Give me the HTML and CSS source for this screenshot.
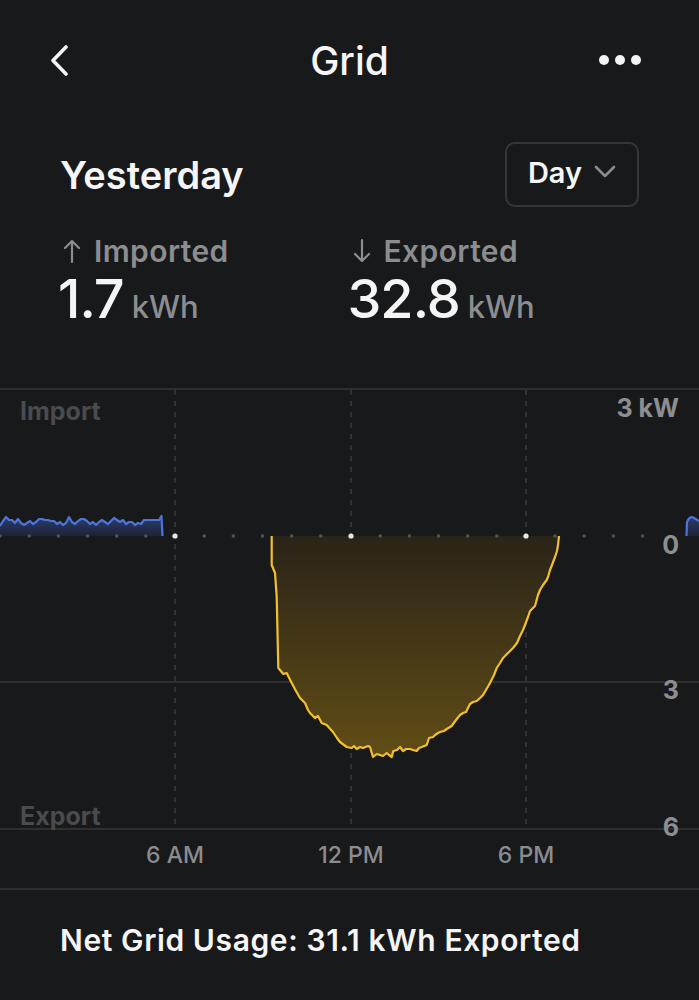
FILE: index.html
```html
<!DOCTYPE html>
<html lang="en">
<head>
<meta charset="utf-8">
<title>Grid</title>
<link rel="stylesheet" href="styles.css">
</head>
<body>
<div class="app">
  <header class="topbar">
    <button class="icon-btn back" aria-label="Back">
      <svg width="24" height="32" viewBox="0 0 24 32"><path d="M16 3 L3 16.5 L16 30" fill="none" stroke="#f4f4f5" stroke-width="3.6" stroke-linecap="round" stroke-linejoin="round"/></svg>
    </button>
    <h1 class="title">Grid</h1>
    <button class="icon-btn more" aria-label="More">
      <svg width="44" height="12" viewBox="0 0 44 12"><circle cx="6" cy="6" r="5" fill="#f4f4f5"/><circle cx="22" cy="6" r="5" fill="#f4f4f5"/><circle cx="38" cy="6" r="5" fill="#f4f4f5"/></svg>
    </button>
  </header>

  <section class="summary">
    <div class="period-row">
      <h2 class="period">Yesterday</h2>
      <button class="range">Day
        <svg class="chev" width="22" height="14" viewBox="0 0 22 14"><path d="M2 2 L11 11 L20 2" fill="none" stroke="#8b8c8f" stroke-width="2.6" stroke-linecap="round" stroke-linejoin="round"/></svg>
      </button>
    </div>
    <div class="stats">
      <div class="stat">
        <div class="stat-label"><svg class="arrow" width="18" height="26" viewBox="0 0 18 26"><path d="M9 24 V3 M2 10 L9 3 L16 10" fill="none" stroke="#8c8d90" stroke-width="2.2" stroke-linecap="round" stroke-linejoin="round"/></svg>Imported</div>
        <div class="stat-value">1.7<span class="unit">kWh</span></div>
      </div>
      <div class="stat">
        <div class="stat-label"><svg class="arrow" width="18" height="26" viewBox="0 0 18 26"><path d="M9 2 V23 M2 16 L9 23 L16 16" fill="none" stroke="#8c8d90" stroke-width="2.2" stroke-linecap="round" stroke-linejoin="round"/></svg>Exported</div>
        <div class="stat-value">32.8<span class="unit">kWh</span></div>
      </div>
    </div>
  </section>

  <div class="chart">
    <svg class="chart-svg" width="699" height="500" viewBox="0 388 699 500">
      <defs>
        <linearGradient id="gold" x1="0" y1="536" x2="0" y2="758" gradientUnits="userSpaceOnUse">
          <stop offset="0" stop-color="#2a2418"/>
          <stop offset="1" stop-color="#614d15"/>
        </linearGradient>
        <linearGradient id="blue" x1="0" y1="516" x2="0" y2="536" gradientUnits="userSpaceOnUse">
          <stop offset="0" stop-color="#2c3e6e"/>
          <stop offset="1" stop-color="#1c2336"/>
        </linearGradient>
      </defs>
      <!-- horizontal grid -->
      <line class="hline" x1="0" y1="389" x2="699" y2="389"/>
      <line class="hline" x1="0" y1="682" x2="699" y2="682"/>
      <line class="hline" x1="0" y1="829" x2="699" y2="829"/>
      <!-- vertical dashed -->
      <line class="vline" x1="175" y1="390" x2="175" y2="828"/>
      <line class="vline" x1="351" y1="390" x2="351" y2="828"/>
      <line class="vline" x1="526" y1="390" x2="526" y2="828"/>

      <!-- import area -->
      <path fill="url(#blue)" d="M0 526 L3 521 L6 517 L9 520 L12 520 L15 523 L18 519 L21 523 L24 525 L27 523 L30 521 L33 524 L36 522 L39 519 L42 519 L45 520 L48 520 L51 521 L54 521 L57 524 L60 522 L63 525 L66 523 L69 517 L72 522 L75 524 L78 521 L81 519 L84 519 L87 521 L90 524 L93 522 L96 525 L99 522 L102 520 L105 522 L108 524 L111 521 L114 518 L117 520 L120 522 L123 520 L126 524 L129 522 L132 522 L135 525 L138 523 L141 524 L144 520 L147 520 L150 520 L153 520 L156 520 L159 520 L161.5 516 L162.5 536 L0 536 Z"/>
      <path class="blue-line" d="M0 526 L3 521 L6 517 L9 520 L12 520 L15 523 L18 519 L21 523 L24 525 L27 523 L30 521 L33 524 L36 522 L39 519 L42 519 L45 520 L48 520 L51 521 L54 521 L57 524 L60 522 L63 525 L66 523 L69 517 L72 522 L75 524 L78 521 L81 519 L84 519 L87 521 L90 524 L93 522 L96 525 L99 522 L102 520 L105 522 L108 524 L111 521 L114 518 L117 520 L120 522 L123 520 L126 524 L129 522 L132 522 L135 525 L138 523 L141 524 L144 520 L147 520 L150 520 L153 520 L156 520 L159 520 L161.5 516 L162.5 536"/>
      <path fill="url(#blue)" d="M686.5 536 L687 522 Q690 515 694 518 L699 521 L699 536 Z"/>
      <path class="blue-line" d="M686.5 536 L687 522 Q690 515 694 518 L699 521"/>

      <!-- export area -->
      <path fill="url(#gold)" d="M271.7 536 L271.7 565 L275 573 L276.7 597 L278.3 668 L283.3 674 L286.7 673 L291.7 683 L296 691 L300 698 L305 703 L308 710 L310 713 L315 718 L318 716 L321.7 723 L326.7 725 L333 732 L337 738 L340 742 L346.7 747 L351.7 748 L354 746 L356.7 749 L360 747 L363 748 L368 746 L370 747 L373 757 L376.7 754 L380 755 L383 756 L386.7 753 L389 755 L391.7 757 L393.3 751 L397 750 L400 747 L403 751 L406 749 L410 749 L413 750 L416.7 751 L419 748 L421.7 747 L426.7 745 L429 738 L433 737 L435 735 L438 733 L440 732 L444 731 L446.7 729 L451.7 726 L456 720 L460 715 L463 713 L466 712 L470 704 L473 702 L476.7 701 L480 698 L483 695 L486 690 L490 683 L494 675 L496.7 668 L500 663 L503 658 L508 653 L513 648 L517 643 L520 636 L523 630 L525 625 L528 617 L530 611 L533 608 L535 606 L538 595 L540 590 L543 585 L546.7 580 L548 577 L550 570 L552 565 L555 557 L557 551 L558 545 L559 536 Z"/>
      <path class="gold-line" d="M271.7 536 L271.7 565 L275 573 L276.7 597 L278.3 668 L283.3 674 L286.7 673 L291.7 683 L296 691 L300 698 L305 703 L308 710 L310 713 L315 718 L318 716 L321.7 723 L326.7 725 L333 732 L337 738 L340 742 L346.7 747 L351.7 748 L354 746 L356.7 749 L360 747 L363 748 L368 746 L370 747 L373 757 L376.7 754 L380 755 L383 756 L386.7 753 L389 755 L391.7 757 L393.3 751 L397 750 L400 747 L403 751 L406 749 L410 749 L413 750 L416.7 751 L419 748 L421.7 747 L426.7 745 L429 738 L433 737 L435 735 L438 733 L440 732 L444 731 L446.7 729 L451.7 726 L456 720 L460 715 L463 713 L466 712 L470 704 L473 702 L476.7 701 L480 698 L483 695 L486 690 L490 683 L494 675 L496.7 668 L500 663 L503 658 L508 653 L513 648 L517 643 L520 636 L523 630 L525 625 L528 617 L530 611 L533 608 L535 606 L538 595 L540 590 L543 585 L546.7 580 L548 577 L550 570 L552 565 L555 557 L557 551 L558 545 L559 536"/>

      <!-- zero line dots -->
      <g class="dots">
        <circle cx="0" cy="536" r="1.8"/><circle cx="29.2" cy="536" r="1.8"/><circle cx="58.3" cy="536" r="1.8"/><circle cx="87.5" cy="536" r="1.8"/><circle cx="116.7" cy="536" r="1.8"/><circle cx="145.8" cy="536" r="1.8"/>
        <circle cx="204.2" cy="536" r="1.8"/><circle cx="233.3" cy="536" r="1.8"/><circle cx="262.5" cy="536" r="1.8"/><circle cx="291.7" cy="536" r="1.8"/><circle cx="320.8" cy="536" r="1.8"/>
        <circle cx="380.2" cy="536" r="1.8"/><circle cx="409.4" cy="536" r="1.8"/><circle cx="438.5" cy="536" r="1.8"/><circle cx="467.7" cy="536" r="1.8"/><circle cx="496.9" cy="536" r="1.8"/>
        <circle cx="555" cy="536" r="1.8"/><circle cx="584.2" cy="536" r="1.8"/><circle cx="613.3" cy="536" r="1.8"/><circle cx="642.5" cy="536" r="1.8"/>
      </g>
      <g class="major-dots">
        <circle cx="175" cy="536" r="2.6"/><circle cx="351" cy="536" r="2.6"/><circle cx="526" cy="536" r="2.6"/>
      </g>

      <!-- labels -->
      <text class="side-label" x="20" y="420">Import</text>
      <text class="side-label" x="20" y="825">Export</text>
      <text class="axis-label" x="679" y="417" text-anchor="end">3 kW</text>
      <text class="axis-label" x="679" y="554" text-anchor="end">0</text>
      <text class="axis-label" x="679" y="699" text-anchor="end">3</text>
      <text class="axis-label" x="679" y="836" text-anchor="end">6</text>
      <text class="time-label" x="175" y="863" text-anchor="middle">6 AM</text>
      <text class="time-label" x="351" y="863" text-anchor="middle">12 PM</text>
      <text class="time-label" x="526" y="863" text-anchor="middle">6 PM</text>
    </svg>
  </div>

  <footer class="net">Net Grid Usage: 31.1 kWh Exported</footer>
</div>
</body>
</html>
```

FILE: styles.css
```css
* { box-sizing: border-box; }

html, body {
  margin: 0;
  padding: 0;
  background: #18191b;
}

body {
  font-family: Inter, Roboto, "Liberation Sans", Arial, sans-serif;
  color: #f3f3f4;
}

.app {
  width: 699px;
  min-height: 1000px;
  background: #18191b;
  overflow: hidden;
}

.topbar {
  height: 120px;
  display: grid;
  grid-template-columns: 1fr auto 1fr;
  align-items: center;
  padding: 0 52px;
}

.icon-btn {
  background: none;
  border: 0;
  padding: 0;
  display: flex;
  align-items: center;
}

.back { justify-self: start; margin-left: -2px; }
.more { justify-self: end; margin-right: 5px; }

.title {
  margin: 0;
  font-size: 39px;
  font-weight: 500;
  color: #f5f5f6;
}

.summary {
  padding: 22px 60px 0 60px;
}

.period-row {
  display: flex;
  justify-content: space-between;
  align-items: center;
}

.period {
  margin: 0;
  font-size: 38px;
  font-weight: 600;
  color: #f5f5f6;
}

.range {
  width: 134px;
  height: 65px;
  border: 2.5px solid #35363a;
  border-radius: 10px;
  background: transparent;
  color: #f5f5f6;
  font-family: inherit;
  font-size: 29px;
  font-weight: 600;
  display: flex;
  align-items: center;
  justify-content: center;
  gap: 12px;
  padding: 0 0 4px 0;
}

.chev { margin-top: -2px; }

.stats {
  display: flex;
  margin-top: 26px;
}

.stat { width: 290px; }

.stat-label {
  font-size: 30px;
  font-weight: 600;
  letter-spacing: 0.4px;
  color: #8c8d90;
  line-height: 36px;
  display: flex;
  align-items: center;
  gap: 13px;
  padding-left: 3px;
}

.arrow { flex: none; }

.stat-value {
  font-size: 54px;
  font-weight: 500;
  line-height: 60px;
  color: #f5f5f6;
  margin-left: -2px;
  letter-spacing: -1px;
}

.unit {
  font-size: 31px;
  color: #8c8d90;
  margin-left: 8px;
  letter-spacing: 0;
}

.chart {
  margin-top: 51px;
}

.chart-svg { display: block; }

.hline { stroke: #36373a; stroke-width: 1.6; }
.vline { stroke: #3a3b3e; stroke-width: 1.5; stroke-dasharray: 5 6; }

.blue-line { fill: none; stroke: #4c74db; stroke-width: 2.2; stroke-linejoin: round; }
.gold-line { fill: none; stroke: #f2c02d; stroke-width: 2.2; stroke-linejoin: round; }

.dots circle { fill: #515256; }
.major-dots circle { fill: #e9e9ea; }

.side-label {
  font-family: Inter, Roboto, sans-serif;
  font-size: 25px;
  font-weight: 700;
  fill: #4a4b4e;
}

.axis-label {
  font-family: Inter, Roboto, sans-serif;
  font-size: 25px;
  font-weight: 700;
  fill: #8d8e91;
}

.time-label {
  font-family: Inter, Roboto, sans-serif;
  font-size: 23px;
  font-weight: 500;
  fill: #8b8c8f;
}

.net {
  border-top: 2px solid #2c2d30;
  padding: 32px 60px 0 60px;
  font-size: 30px;
  font-weight: 600;
  letter-spacing: 0.6px;
  color: #f5f5f6;
}
```
